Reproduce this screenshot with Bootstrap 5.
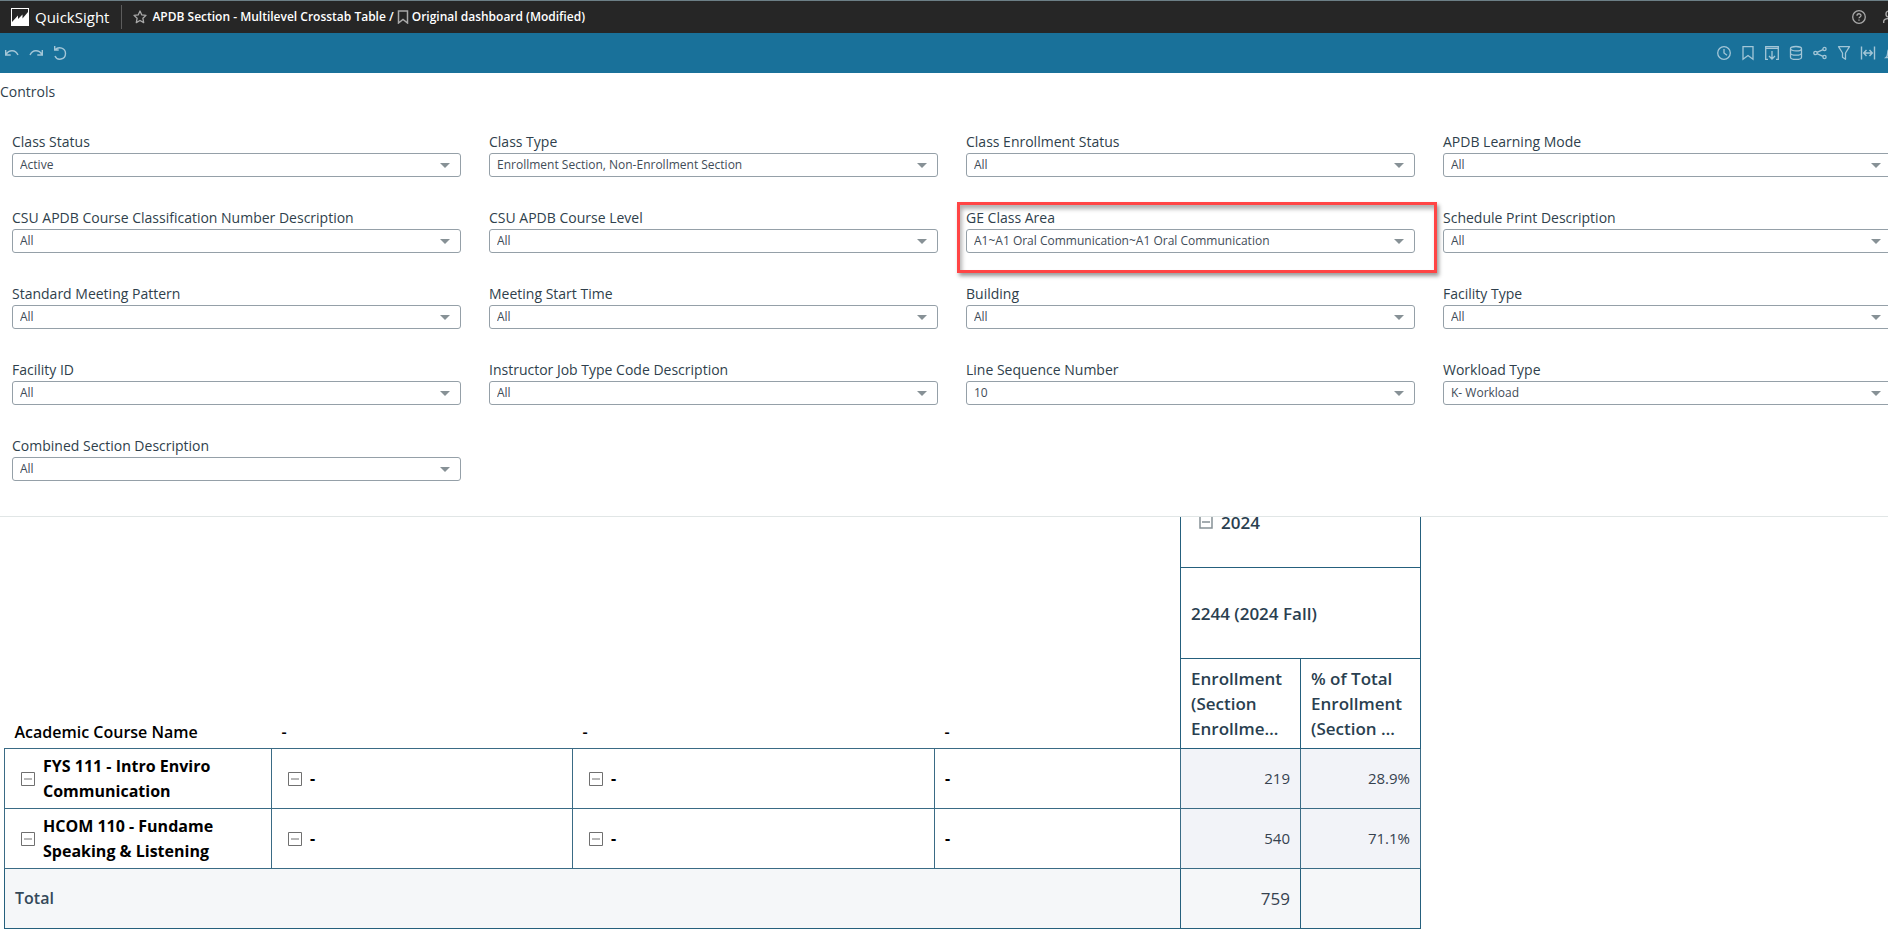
<!DOCTYPE html>
<html lang="en">
<head>
<meta charset="utf-8">
<meta name="viewport" content="width=device-width, initial-scale=1">
<title>APDB Section - Multilevel Crosstab Table</title>
<link href="https://cdn.jsdelivr.net/npm/bootstrap@5.3.0/dist/css/bootstrap.min.css" rel="stylesheet">
<style>
  body { font-family: "Open Sans", "Noto Sans", sans-serif; font-size: 14px; color: #2f3f4c; background: #fff; overflow: hidden; }
  /* the sheet is slightly wider than the window and runs off its right edge */
  .shell { width: calc(100% + 20px); }
  svg { display: block; fill: none; stroke: currentColor; }
  .icon-btn { border: 0; background: none; padding: 0; color: inherit; width: 16px; height: 16px; flex: none; }

  .topbar { height: 33px; background: #262626; border-top: 1px solid #6c7f86; color: #fff; padding: 0 9px 0 11px; }
  .brand { font-size: 15px; line-height: 20px; color: #fff; text-decoration: none; gap: 6px; }
  .divider { width: 1px; height: 24px; background: #5c5c5c; margin: 0 11px 0 12px; }
  .crumbs { font-size: 12px; line-height: 20px; font-weight: 600; gap: 3px; margin: 0; }
  .dim { color: #a9a9a9; }
  .toolbar { height: 40px; background: #19719a; color: #a3c6d7; padding: 0 8px 0 4px; }

  .controls-panel { border-bottom: 1px solid #e1e6e6; padding: 7px 0 35px; }
  .panel-title { font-size: 14px; line-height: 24px; font-weight: 400; margin: 0 0 28px; }
  .controls-grid { row-gap: 31px; }
  .control { padding: 0 16px 0 12px; position: relative; }
  .control label { display: block; font-size: 14px; line-height: 20px; padding-bottom: 1px; }
  .control .form-select {
    height: 24px; padding: 0 28px 0 7px; font-size: 12px; line-height: 20px; color: #3f4c58;
    border: 1px solid #95a0a8; border-radius: 3px;
    background-image: url("data:image/svg+xml,%3Csvg xmlns='http://www.w3.org/2000/svg' viewBox='0 0 10 5'%3E%3Cpath fill='%23879196' d='M0 0h10L5 5z'/%3E%3C/svg%3E");
    background-size: 10px 5px; background-position: right 10px center;
  }
  .callout { position: absolute; inset: -6px -6px -20px 3px; border: 3px solid #ff4545; pointer-events: none;
    box-shadow: 2px 3px 4px rgba(0,0,0,.4), inset 2px 4px 4px rgba(0,0,0,.3); }

  .sheet { overflow: hidden; padding-left: 4px; }
  /* the table is scrolled so that its first header row is partly hidden */
  .pivot { margin-top: -41px; table-layout: fixed; border-collapse: collapse; width: 1416px; font-size: 16px; line-height: 25px; color: #000; }
  .pivot th, .pivot td { padding: 0 10px; vertical-align: middle; border: 1px solid #3a6b85; font-weight: 600; }
  .pivot tbody th { font-weight: 700; }
  .pivot .open-cell { border: 0; vertical-align: bottom; padding-bottom: 3px; }
  .pivot .col-head { color: #2a3f50; font-size: 17px; line-height: 25px; border-color: #25607d; }
  .pivot td.num { font-size: 15px; font-weight: 400; text-align: right; background: #f2f3f8; color: #36424f; }
  .pivot .fold { padding-left: 16px; }
  .pivot tfoot th, .pivot tfoot td { background: #f5f7f9; color: #34495a; border-color: #25607d; }
  .pivot tfoot td.num { font-size: 17px; background: #f5f7f9; }
  .fold-btn { width: 14px; height: 14px; color: #707070; }
  .h-band { height: 91px; } .h-labels { height: 90px; } .h-row { height: 60px; }
</style>
</head>
<body>
<div class="shell">
  <header class="topbar d-flex align-items-center">
    <a href="#" class="brand d-flex align-items-center">
      <svg width="18" height="18" viewBox="0 0 18 18" stroke="none"><path fill="#fff" d="M0 0h18v18H0z"/><path fill="#262626" stroke="none" d="M1 1h16v3l-5.500 6.500V6.500L7 11V7.500L1 14z"/></svg>
      <span>QuickSight</span>
    </a>
    <span class="divider"></span>
    <h1 class="crumbs d-flex align-items-center">
      <button class="icon-btn dim" aria-label="Favorite"><svg width="14" height="14" viewBox="0 0 14 14" stroke-width="1.300" stroke-linejoin="round"><path d="M7 1l1.800 3.900 4.200.5-3.100 2.900.8 4.300L7 10.500l-3.700 2.100.8-4.300L1 5.400l4.200-.5z"/></svg></button>
      <span>APDB Section - Multilevel Crosstab Table /</span>
      <svg class="dim" width="12" height="14" viewBox="0 0 12 14" stroke-width="1.500"><path d="M1.500 1h9v12L6 9.500 1.500 13z"/></svg>
      <span>Original dashboard (Modified)</span>
    </h1>
    <div class="ms-auto d-flex gap-3 dim">
      <button class="icon-btn" aria-label="Help"><svg width="16" height="16" viewBox="0 0 16 16" stroke-width="1.300"><circle cx="8" cy="8" r="6.300"/><path d="M6 6.700c0-2.600 4-2.500 4-.2C10 8 8 7.900 8 9.300M8 10.500v1.300"/></svg></button>
      <button class="icon-btn" aria-label="Account"><svg width="16" height="16" viewBox="0 0 16 16" stroke-width="1.400"><circle cx="6" cy="5" r="3"/><path d="M.7 14v-1.500c0-4 12-4 12 0V14"/></svg></button>
    </div>
  </header>

  <nav class="toolbar d-flex align-items-center gap-2" aria-label="Dashboard tools">
    <button class="icon-btn" aria-label="Undo"><svg width="16" height="16" viewBox="0 0 16 16" stroke-width="1.400"><path d="M1.700 5v5h5M2 9.500c3-5 9.500-5 12 .5"/></svg></button>
    <button class="icon-btn" aria-label="Redo"><svg width="16" height="16" viewBox="0 0 16 16" stroke-width="1.400"><path d="M14.300 5v5h-5M14 9.500C11 4.500 4.500 4.500 2 10"/></svg></button>
    <button class="icon-btn" aria-label="Reset"><svg width="16" height="16" viewBox="0 0 16 16" stroke-width="1.400"><path d="M2.700 1v4h4M3 4.700c4-4 10.500-1.500 10.500 3.800 0 6.500-8.500 7.500-10.500 2.500"/></svg></button>
    <span class="ms-auto"></span>
    <button class="icon-btn" aria-label="Schedules"><svg width="16" height="16" viewBox="0 0 16 16" stroke-width="1.300"><circle cx="8" cy="8" r="6.300"/><path d="M8 4v4l3 2.200"/></svg></button>
    <button class="icon-btn" aria-label="Bookmarks"><svg width="16" height="16" viewBox="0 0 16 16" stroke-width="1.300"><path d="M3 1.700h10v12.600L8 10.500l-5 3.800z"/></svg></button>
    <button class="icon-btn" aria-label="Export"><svg width="16" height="16" viewBox="0 0 16 16" stroke-width="1.300"><path d="M4 14.300H1.700V1.700h12.600v12.600H12M1.700 3.300h12.600M8 6v8M5 11l3 3 3-3"/></svg></button>
    <button class="icon-btn" aria-label="Data"><svg width="16" height="16" viewBox="0 0 16 16" stroke-width="1.300"><ellipse cx="8" cy="3.700" rx="5.500" ry="2.200"/><path d="M2.500 3.700v8.500c0 2.900 11 2.900 11 0V3.700M2.500 8c0 2.900 11 2.900 11 0"/></svg></button>
    <button class="icon-btn" aria-label="Share"><svg width="16" height="16" viewBox="0 0 16 16" stroke-width="1.300"><circle cx="3.500" cy="8" r="1.700"/><circle cx="12.500" cy="4" r="1.600"/><circle cx="12.500" cy="12" r="1.600"/><path d="M5 7.300l6-2.600M5 8.700l6 2.600"/></svg></button>
    <button class="icon-btn" aria-label="Filter"><svg width="16" height="16" viewBox="0 0 16 16" stroke-width="1.300" stroke-linejoin="round"><path d="M2.500 1.700h11L9.500 8v6.300l-3-2V8z"/></svg></button>
    <button class="icon-btn" aria-label="Fit width"><svg width="16" height="16" viewBox="0 0 16 16" stroke-width="1.400"><path d="M1.500 1.500v13M14.500 1.500v13M4 8h8M6.500 5L3.700 8l2.800 3M9.500 5l2.800 3-2.800 3"/></svg></button>
    <button class="icon-btn" aria-label="Alerts"><svg width="16" height="16" viewBox="0 0 16 16" stroke-width="1.400"><path d="M2 12.500h12C12 11 12.500 8 12 6c-1-4-7-4-8 0-.5 2 0 5-2 6.500z"/></svg></button>
  </nav>

  <section class="controls-panel">
    <h2 class="panel-title">Controls</h2>
    <div class="row row-cols-4 g-0 controls-grid">
      <div class="col control"><label for="c1">Class Status</label><select id="c1" class="form-select"><option>Active</option></select></div>
      <div class="col control"><label for="c2">Class Type</label><select id="c2" class="form-select"><option>Enrollment Section, Non-Enrollment Section</option></select></div>
      <div class="col control"><label for="c3">Class Enrollment Status</label><select id="c3" class="form-select"><option>All</option></select></div>
      <div class="col control"><label for="c4">APDB Learning Mode</label><select id="c4" class="form-select"><option>All</option></select></div>
      <div class="col control"><label for="c5">CSU APDB Course Classification Number Description</label><select id="c5" class="form-select"><option>All</option></select></div>
      <div class="col control"><label for="c6">CSU APDB Course Level</label><select id="c6" class="form-select"><option>All</option></select></div>
      <div class="col control"><label for="c7">GE Class Area</label><select id="c7" class="form-select"><option>A1~A1 Oral Communication~A1 Oral Communication</option></select><span class="callout"></span></div>
      <div class="col control"><label for="c8">Schedule Print Description</label><select id="c8" class="form-select"><option>All</option></select></div>
      <div class="col control"><label for="c9">Standard Meeting Pattern</label><select id="c9" class="form-select"><option>All</option></select></div>
      <div class="col control"><label for="c10">Meeting Start Time</label><select id="c10" class="form-select"><option>All</option></select></div>
      <div class="col control"><label for="c11">Building</label><select id="c11" class="form-select"><option>All</option></select></div>
      <div class="col control"><label for="c12">Facility Type</label><select id="c12" class="form-select"><option>All</option></select></div>
      <div class="col control"><label for="c13">Facility ID</label><select id="c13" class="form-select"><option>All</option></select></div>
      <div class="col control"><label for="c14">Instructor Job Type Code Description</label><select id="c14" class="form-select"><option>All</option></select></div>
      <div class="col control"><label for="c15">Line Sequence Number</label><select id="c15" class="form-select"><option>10</option></select></div>
      <div class="col control"><label for="c16">Workload Type</label><select id="c16" class="form-select"><option>K- Workload</option></select></div>
      <div class="col control"><label for="c17">Combined Section Description</label><select id="c17" class="form-select"><option>All</option></select></div>
    </div>
  </section>

  <main class="sheet">
    <table class="pivot">
      <colgroup><col style="width:267px"><col style="width:301px"><col style="width:362px"><col style="width:246px"><col style="width:120px"><col style="width:120px"></colgroup>
      <thead>
        <tr class="h-band"><td class="open-cell" colspan="4" rowspan="2"></td>
          <th class="col-head" colspan="2"><div class="d-flex align-items-center gap-2 ps-2"><button class="icon-btn fold-btn" style="color:#879196" aria-label="Collapse"><svg width="14" height="14" viewBox="0 0 14 14" stroke-width="1.500"><path d="M1 1h12v12H1zM3 7h8"/></svg></button>2024</div></th></tr>
        <tr class="h-band"><th class="col-head" colspan="2">2244 (2024 Fall)</th></tr>
        <tr class="h-labels">
          <th class="open-cell">Academic Course Name</th><th class="open-cell">-</th><th class="open-cell">-</th><th class="open-cell">-</th>
          <th class="col-head">Enrollment (Section Enrollme…</th><th class="col-head">% of Total Enrollment (Section …</th>
        </tr>
      </thead>
      <tbody>
        <tr class="h-row">
          <th class="fold"><div class="d-flex align-items-center gap-2"><button class="icon-btn fold-btn" aria-label="Collapse"><svg width="14" height="14" viewBox="0 0 14 14"><path d="M.5.5h13v13H.5zM3 7h8"/></svg></button><span>FYS 111 - Intro Enviro<br>Communication</span></div></th>
          <th class="fold"><div class="d-flex align-items-center gap-2"><button class="icon-btn fold-btn" aria-label="Collapse"><svg width="14" height="14" viewBox="0 0 14 14"><path d="M.5.5h13v13H.5zM3 7h8"/></svg></button>-</div></th>
          <th class="fold"><div class="d-flex align-items-center gap-2"><button class="icon-btn fold-btn" aria-label="Collapse"><svg width="14" height="14" viewBox="0 0 14 14"><path d="M.5.5h13v13H.5zM3 7h8"/></svg></button>-</div></th>
          <th>-</th><td class="num">219</td><td class="num">28.9%</td>
        </tr>
        <tr class="h-row">
          <th class="fold"><div class="d-flex align-items-center gap-2"><button class="icon-btn fold-btn" aria-label="Collapse"><svg width="14" height="14" viewBox="0 0 14 14"><path d="M.5.5h13v13H.5zM3 7h8"/></svg></button><span>HCOM 110 - Fundame<br>Speaking &amp; Listening</span></div></th>
          <th class="fold"><div class="d-flex align-items-center gap-2"><button class="icon-btn fold-btn" aria-label="Collapse"><svg width="14" height="14" viewBox="0 0 14 14"><path d="M.5.5h13v13H.5zM3 7h8"/></svg></button>-</div></th>
          <th class="fold"><div class="d-flex align-items-center gap-2"><button class="icon-btn fold-btn" aria-label="Collapse"><svg width="14" height="14" viewBox="0 0 14 14"><path d="M.5.5h13v13H.5zM3 7h8"/></svg></button>-</div></th>
          <th>-</th><td class="num">540</td><td class="num">71.1%</td>
        </tr>
      </tbody>
      <tfoot>
        <tr class="h-row"><th colspan="4">Total</th><td class="num">759</td><td class="num"></td></tr>
      </tfoot>
    </table>
  </main>
</div>
<script src="https://cdn.jsdelivr.net/npm/bootstrap@5.3.0/dist/js/bootstrap.bundle.min.js"></script>
</body>
</html>
